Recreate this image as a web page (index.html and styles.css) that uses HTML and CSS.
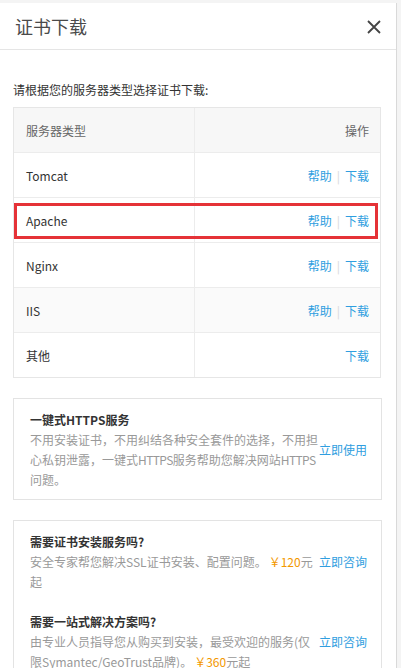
FILE: index.html
```html
<!DOCTYPE html>
<html lang="zh-CN">
<head>
<meta charset="utf-8">
<title>证书下载</title>
<link rel="stylesheet" href="styles.css">
</head>
<body>
<div class="panel">
  <div class="header">
    <div class="title">证书下载</div>
    <svg class="close" width="14" height="14" viewBox="0 0 14 14"><path d="M1 1L13 13M13 1L1 13" stroke="#444" stroke-width="1.8" fill="none"/></svg>
  </div>
  <div class="content">
    <p class="intro">请根据您的服务器类型选择证书下载:</p>
    <div class="table">
      <div class="row head"><div class="cell name">服务器类型</div><div class="cell ops">操作</div></div>
      <div class="row"><div class="cell name">Tomcat</div><div class="cell ops"><a>帮助</a><span class="sep">|</span><a>下载</a></div></div>
      <div class="row marked"><div class="cell name">Apache</div><div class="cell ops"><a>帮助</a><span class="sep">|</span><a>下载</a></div><div class="highlight"></div></div>
      <div class="row"><div class="cell name">Nginx</div><div class="cell ops"><a>帮助</a><span class="sep">|</span><a>下载</a></div></div>
      <div class="row hover"><div class="cell name">IIS</div><div class="cell ops"><a>帮助</a><span class="sep">|</span><a>下载</a></div></div>
      <div class="row last"><div class="cell name">其他</div><div class="cell ops"><a>下载</a></div></div>
    </div>
    <div class="box box-one">
      <div class="item">
        <div class="text">
          <div class="item-title">一键式HTTPS服务</div>
          <div class="desc">不用安装证书，不用纠结各种安全套件的选择，不用担心私钥泄露，一键式<span class="en">HTTPS</span>服务帮助您解决网站<span class="en">HTTPS</span>问题。</div>
        </div>
        <a class="action">立即使用</a>
      </div>
    </div>
    <div class="box">
      <div class="item">
        <div class="text">
          <div class="item-title">需要证书安装服务吗?</div>
          <div class="desc">安全专家帮您解决SSL证书安装、配置问题。<span class="price">￥120</span>元起</div>
        </div>
        <a class="action">立即咨询</a>
      </div>
      <div class="item">
        <div class="text">
          <div class="item-title">需要一站式解决方案吗?</div>
          <div class="desc">由专业人员指导您从购买到安装，最受欢迎的服务(仅限Symantec/GeoTrust品牌)。<span class="price">￥360</span>元起</div>
        </div>
        <a class="action">立即咨询</a>
      </div>
    </div>
  </div>
</div>
</body>
</html>
```

FILE: styles.css
```css
html, body {
  margin: 0;
  padding: 0;
}
body {
  background: #f4f4f4;
  font-family: "Noto Sans CJK SC", "Noto Sans", sans-serif;
  font-size: 12px;
  color: #333;
  overflow: hidden;
}
.panel {
  width: 396px;
  margin-top: 3px;
  min-height: 700px;
  background: #fff;
  border-right: 1px solid #d9d9d9;
}
.header {
  height: 46px;
  border-bottom: 1px solid #e5e5e5;
  display: flex;
  align-items: center;
  justify-content: space-between;
  padding: 0 15px 0 15px;
}
.title {
  font-size: 18px;
  color: #4a4a4a;
  line-height: 24px;
}
.close {
  display: block;
  margin-top: 1px;
}
.content {
  padding: 30px 15px 0 13px;
}
.intro {
  margin: 0 0 7px 0;
  line-height: 20px;
  color: #333;
}
.table {
  border: 1px solid #e6e6e6;
  width: 366px;
}
.row {
  position: relative;
  display: grid;
  grid-template-columns: 181px 1fr;
  height: 44px;
  border-bottom: 1px solid #ececec;
}
.row.last {
  border-bottom: none;
}
.row.head {
  background: #f7f7f7;
  color: #666;
}
.row.hover {
  background: #fafafa;
}
.cell {
  display: flex;
  align-items: center;
}
.cell.name {
  padding-left: 12px;
  border-right: 1px solid #ececec;
}
.cell.ops {
  justify-content: flex-end;
  padding-right: 11px;
}
.ops a {
  color: #2f9ee0;
}
.sep {
  color: #d8d8d8;
  margin: 0 5px;
}
.highlight {
  position: absolute;
  top: 5px;
  left: 0;
  right: 2px;
  height: 30px;
  border: 3px solid #e53237;
}
.box {
  margin-top: 20px;
  width: 336px;
  border: 1px solid #e3e3e3;
  padding: 11px 15px 9px 16px;
}
.item {
  display: flex;
  align-items: center;
  justify-content: space-between;
}
.item + .item {
  margin-top: 20px;
}
.text {
  flex: 0 0 289px;
}
.item-title {
  font-weight: bold;
  color: #333;
  line-height: 20px;
}
.desc {
  color: #999;
  line-height: 20px;
}
.en {
  letter-spacing: -0.6px;
}
.price {
  color: #f39800;
  margin-left: 2px;
}
.action {
  color: #2f9ee0;
  white-space: nowrap;
  line-height: 20px;
}
```
